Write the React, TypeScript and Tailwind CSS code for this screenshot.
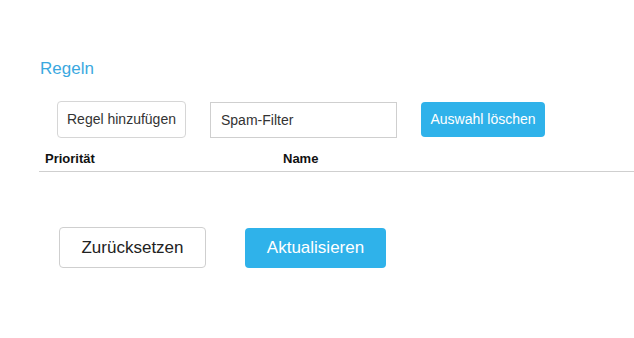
export default function App() {
  return (
    <div className="min-h-[338px] w-[634px] overflow-hidden bg-white font-['Liberation_Sans',Arial,sans-serif] text-[#222]">
      <div className="pl-[40px] pt-[59px]">
        <h2 className="text-[17px] leading-[20px] text-[#3aa8e0]">Regeln</h2>

        <div className="mt-[22px] ml-[17px] flex items-center gap-[24px]">
          <button className="h-[37px] w-[129px] rounded-[4px] border border-[#d6d6d6] bg-white text-[14px] text-[#333]">
            Regel hinzufügen
          </button>
          <input
            defaultValue="Spam-Filter"
            className="h-[36px] w-[187px] border border-[#cfcfcf] bg-white px-[10px] text-[14px] text-[#333] outline-none"
          />
          <button className="h-[35px] w-[124px] rounded-[4px] bg-[#2fb2ea] text-[14px] text-white">
            Auswahl löschen
          </button>
        </div>

        <div className="mt-[8px] -ml-px flex h-[26px] items-center border-b border-[#cfcfcf] pl-[6px] text-[13px] font-bold text-[#111]">
          <div className="w-[238px]">Priorität</div>
          <div>Name</div>
        </div>

        <div className="mt-[55px] ml-[19px] flex items-center gap-[39px]">
          <button className="h-[41px] w-[147px] rounded-[4px] border border-[#cfcfcf] bg-white text-[17px] text-[#222]">
            Zurücksetzen
          </button>
          <button className="h-[40px] w-[141px] rounded-[4px] bg-[#2fb2ea] text-[17px] text-white">
            Aktualisieren
          </button>
        </div>
      </div>
    </div>
  );
}
